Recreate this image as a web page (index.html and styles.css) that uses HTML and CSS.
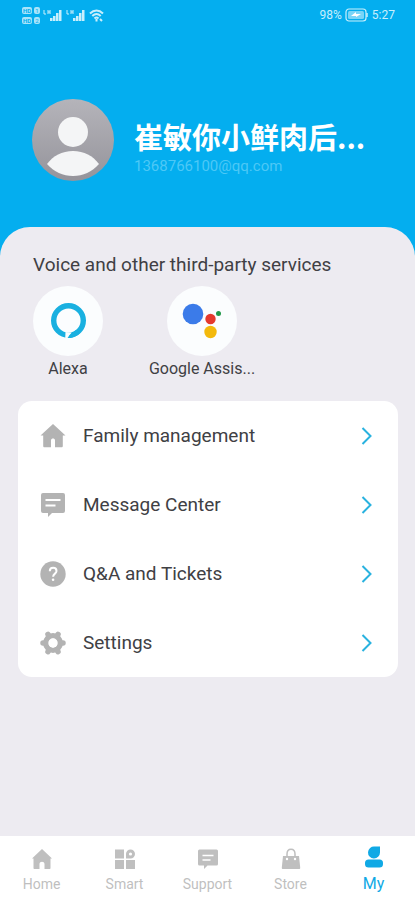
FILE: index.html
```html
<!DOCTYPE html>
<html lang="en">
<head>
  <meta charset="UTF-8">
  <meta name="viewport" content="width=device-width, initial-scale=1">
  <title>My</title>
  <link rel="stylesheet" href="styles.css">
</head>
<body>
  <header class="top">
    <div class="status-bar">
      <div class="status-left">
        <div class="hd">
          <span class="hd-row"><b>HD</b><i>1</i></span>
          <span class="hd-row"><b>HD</b><i>2</i></span>
        </div>
        <svg class="signal" width="20" height="15" viewBox="0 0 20 15">
          <path class="line" d="M1 2v4h2M5 2v4M5 4h2M7 2v4" stroke="currentColor" stroke-width="1"/>
          <path d="M7 10h2.500v3H7zM10 8h2.500v5H10zM13 5h2.500v8H13zM16 2h2.500v11H16z"/>
        </svg>
        <svg class="signal" width="20" height="15" viewBox="0 0 20 15">
          <path class="line" d="M1 2v4h2M5 2v4M5 4h2M7 2v4" stroke="currentColor" stroke-width="1"/>
          <path d="M7 10h2.500v3H7zM10 8h2.500v5H10zM13 5h2.500v8H13zM16 2h2.500v11H16z"/>
        </svg>
        <svg width="15" height="15" viewBox="0 0 15 15" stroke="currentColor" stroke-width="2">
          <path class="line" d="M1 5.500c4-4 9-4 13 0M3.300 8c2.600-2.500 5.800-2.500 8.400 0M5.500 10.400c1.300-1.200 2.700-1.200 4 0"/>
          <path class="line" d="M7.500 11v2.500M11 11l2 2" />
        </svg>
      </div>
      <div class="status-right">
        <span>98%</span>
        <svg width="24" height="14" viewBox="0 0 24 14">
          <rect x="1" y="1" width="20" height="12" rx="3" fill="none" stroke="currentColor" stroke-width="1.200"/>
          <rect x="3" y="3" width="16" height="8" rx="1.500" opacity=".6"/>
          <path d="M22 5v4" stroke="currentColor" stroke-width="1.500"/>
          <path d="M6 8l5-4v2h5l-5 3V8z" fill="#fff"/>
        </svg>
        <span>5:27</span>
      </div>
    </div>
    <div class="profile">
      <svg class="avatar" viewBox="0 0 82 82">
        <defs>
          <linearGradient id="avatar-bg" x1="0" y1="0" x2="0" y2="1">
            <stop offset="0" stop-color="#b5b4ba"/>
            <stop offset="1" stop-color="#95949b"/>
          </linearGradient>
        </defs>
        <circle cx="41" cy="41" r="41" fill="url(#avatar-bg)"/>
        <circle cx="41" cy="33" r="15" fill="#f4f5f6"/>
        <path d="M15 65c6-8 15-13 26-13s20 5 26 13c-7 8-16 12-26 12s-19-4-26-12z" fill="#f4f5f6"/>
      </svg>
      <div class="profile-text">
        <h1 class="name" lang="zh">崔敏你小鲜肉后...</h1>
        <p class="email">1368766100@qq.com</p>
      </div>
    </div>
  </header>

  <main class="panel">
    <h2 class="section-title">Voice and other third-party services</h2>
    <div class="services">
      <a class="service" href="#alexa">
        <span class="service-icon">
          <svg width="70" height="70" viewBox="0 0 70 70">
            <circle cx="35.500" cy="34.500" r="14.800" fill="none" stroke="#19b0e0" stroke-width="5.400"/>
            <path d="M32.500 46l-.3 7h3.300l.3-3 3-3.500z" fill="#fbfdfe"/>
            <path d="M34.500 52c5 .3 10-2 12.500-5l-4-3c-2 1.800-6 4.500-8.500 8z" fill="#19b0e0"/>
          </svg>
        </span>
        <span>Alexa</span>
      </a>
      <a class="service" href="#google">
        <span class="service-icon">
          <svg width="70" height="70" viewBox="0 0 70 70">
            <circle cx="26" cy="28" r="10.300" fill="#3b7be9"/>
            <circle cx="43.500" cy="33" r="5.200" fill="#e5392d"/>
            <circle cx="43.500" cy="46" r="6.200" fill="#f3b90c"/>
            <circle cx="51.500" cy="27.500" r="2.500" fill="#21994a"/>
          </svg>
        </span>
        <span>Google Assis...</span>
      </a>
    </div>

    <nav class="menu">
      <a class="menu-item" href="#family">
        <svg class="menu-icon" viewBox="0 0 26 26"><path d="M13 1L.500 12.500h2.700V23c0 .8.500 1.300 1.300 1.300h6.500V17.500c0-2.600 4-2.600 4 0v6.800h6.500c.8 0 1.300-.5 1.300-1.300V12.500h2.700z"/></svg>
        <span class="menu-label">Family management</span>
        <svg class="arrow" viewBox="0 0 11 18"><path d="M1.500 1L9.500 9l-8 8"/></svg>
      </a>
      <a class="menu-item" href="#messages">
        <svg class="menu-icon" viewBox="0 0 26 26">
          <path d="M3 1h20a2 2 0 0 1 2 2v16a2 2 0 0 1-2 2H12l-4 4v-4H3a2 2 0 0 1-2-2V3a2 2 0 0 1 2-2z"/>
          <path d="M5.500 8h15M5.500 13.500h10" stroke="#fff" stroke-width="2"/>
        </svg>
        <span class="menu-label">Message Center</span>
        <svg class="arrow" viewBox="0 0 11 18"><path d="M1.500 1L9.500 9l-8 8"/></svg>
      </a>
      <a class="menu-item" href="#tickets">
        <svg class="menu-icon" viewBox="0 0 26 26">
          <circle cx="13" cy="13" r="12.700"/>
          <path class="line" d="M9.800 10.200c0-4.600 6.700-4.400 6.700-.2 0 2.700-3.400 2.600-3.400 5.800" stroke="#fff" stroke-width="2"/>
          <circle cx="13.100" cy="18.700" r="1.300" fill="#fff"/>
        </svg>
        <span class="menu-label">Q&amp;A and Tickets</span>
        <svg class="arrow" viewBox="0 0 11 18"><path d="M1.500 1L9.500 9l-8 8"/></svg>
      </a>
      <a class="menu-item" href="#settings">
        <svg class="menu-icon" viewBox="0 0 26 26">
          <circle cx="13" cy="13" r="7.200" fill="none" stroke="currentColor" stroke-width="5.500"/>
          <g stroke="currentColor" stroke-width="5.500" stroke-linecap="round">
            <path d="M20 13h3M3 13h3M16.500 6.900l1.500-2.600M8 21.700l1.500-2.600M9.500 6.900L8 4.300M18 21.700l-1.500-2.600"/>
          </g>
          <circle cx="13" cy="13" r="4.700" fill="#fff"/>
        </svg>
        <span class="menu-label">Settings</span>
        <svg class="arrow" viewBox="0 0 11 18"><path d="M1.500 1L9.500 9l-8 8"/></svg>
      </a>
    </nav>
  </main>

  <nav class="tabs">
    <a class="tab" href="#home">
      <svg class="tab-icon" viewBox="0 0 22 22"><path d="M11 1L1 10.500h1.500V20c0 .6.400 1 1 1h5v-5c0-3 5-3 5 0v5h5c.6 0 1-.4 1-1v-9.500H21z"/></svg>
      <span>Home</span>
    </a>
    <a class="tab" href="#smart">
      <svg class="tab-icon" viewBox="0 0 22 22">
        <path d="M1 1.500h9v9H1zM1 12h9v9H1zM12 12h9v9h-9zM12 10.500V6a4.500 4.500 0 1 1 4.500 4.500z"/>
        <circle cx="16.500" cy="6" r="1.600" fill="#fff"/>
      </svg>
      <span>Smart</span>
    </a>
    <a class="tab" href="#support">
      <svg class="tab-icon" viewBox="0 0 22 22">
        <path d="M2.500 1.500h17a1.500 1.500 0 0 1 1.500 1.500v13a1.500 1.500 0 0 1-1.500 1.500h-9L7 21v-3.500H2.500A1.500 1.500 0 0 1 1 16V3a1.500 1.500 0 0 1 1.500-1.500z"/>
        <path d="M5.500 7.500h11M5.500 12h8" stroke="#fff" stroke-width="1.600"/>
      </svg>
      <span>Support</span>
    </a>
    <a class="tab" href="#store">
      <svg class="tab-icon" viewBox="0 0 22 22">
        <path d="M3 8h16l1.200 11.500c.1 1-.4 1.500-1.200 1.500H3c-.8 0-1.300-.5-1.200-1.500z"/>
        <path class="line" d="M7 10V6c0-6.500 8-6.500 8 0v4" stroke="currentColor" stroke-width="1.500"/>
        <circle cx="7" cy="11" r="1.200" fill="#fff"/>
        <circle cx="15" cy="11" r="1.200" fill="#fff"/>
      </svg>
      <span>Store</span>
    </a>
    <a class="tab active" href="#my">
      <svg class="tab-icon" viewBox="0 0 22 22">
        <path d="M11.500 -1.500H17v6a6 6 0 1 1-5.500-6z"/>
        <rect x="2" y="11.500" width="18" height="8" rx="3.500"/>
      </svg>
      <span>My</span>
    </a>
  </nav>
</body>
</html>
```
FILE: styles.css
```css
* { box-sizing: border-box; }
body {
  margin: 0;
  min-height: 100vh;
  display: flex;
  flex-direction: column;
  background: #edebf1;
  font-family: Roboto, "Noto Sans CJK SC", sans-serif;
  color: #404044;
}
a { color: inherit; text-decoration: none; }
svg { fill: currentColor; flex: none; overflow: visible; }
.line { fill: none; }

/* Header */
.top { background: #04aeef; padding-bottom: 104px; }
.status-bar {
  display: flex;
  justify-content: space-between;
  height: 30px;
  padding: 0 20px 0 22px;
  color: #c9effc;
  font-size: 12px;
}
.status-left, .status-right { display: flex; align-items: center; }
.status-left { gap: 3px; }
.status-right { gap: 3px; }
.hd { display: flex; flex-direction: column; gap: 3px; }
.hd-row { display: flex; gap: 2px; font-size: 6px; line-height: 7px; }
.hd-row b, .hd-row i { background: #a9e4fa; color: #04aeef; border-radius: 2px; font-style: normal; }
.hd-row b { padding: 0 1px; }
.hd-row i { padding: 0 1px; }
.profile { display: flex; align-items: center; gap: 20px; padding: 69px 32px 0; }
.avatar { width: 82px; height: 82px; }
.profile-text { min-width: 0; padding-top: 12px; }
.name { margin: 0; color: #fff; font-size: 29px; line-height: 40px; font-weight: 700; font-family: "Noto Sans CJK SC", sans-serif; white-space: nowrap; }
.email { margin: 0; color: #4dc8f6; font-size: 15px; line-height: 20px; }

/* Content */
.panel {
  flex: 1;
  margin-top: -58px;
  padding: 24px 17px 24px 18px;
  background: #edebf1;
  border-radius: 30px 30px 0 0;
}
.section-title { margin: 0 15px; font-size: 19px; line-height: 28px; font-weight: 400; }
.services { display: flex; gap: 22px; margin: 7px -6px 0; }
.service { display: flex; flex-direction: column; align-items: center; width: 112px; gap: 3px; font-size: 16px; line-height: 20px; white-space: nowrap; }
.service-icon { width: 70px; height: 70px; border-radius: 50%; background: #fbfdfe; }
.service-icon svg { display: block; }
.menu { margin-top: 22px; background: #fff; border-radius: 14px; }
.menu-item { display: flex; align-items: center; height: 69px; padding: 0 26px 0 22px; }
.menu-icon { width: 26px; height: 26px; color: #b3b3b3; }
.menu-label { flex: 1; margin-left: 17px; font-size: 19px; }
.arrow { width: 11px; height: 18px; fill: none; stroke: #29b2df; stroke-width: 2; }

/* Bottom tabs */
.tabs { display: flex; height: 64px; background: #fff; color: #bfbfbf; }
.tab { flex: 1; display: flex; flex-direction: column; align-items: center; gap: 4px; padding-top: 12px; font-size: 14px; line-height: 20px; }
.tab-icon { width: 22px; height: 22px; }
.tab.active { color: #10a9e5; font-size: 16px; }
```
